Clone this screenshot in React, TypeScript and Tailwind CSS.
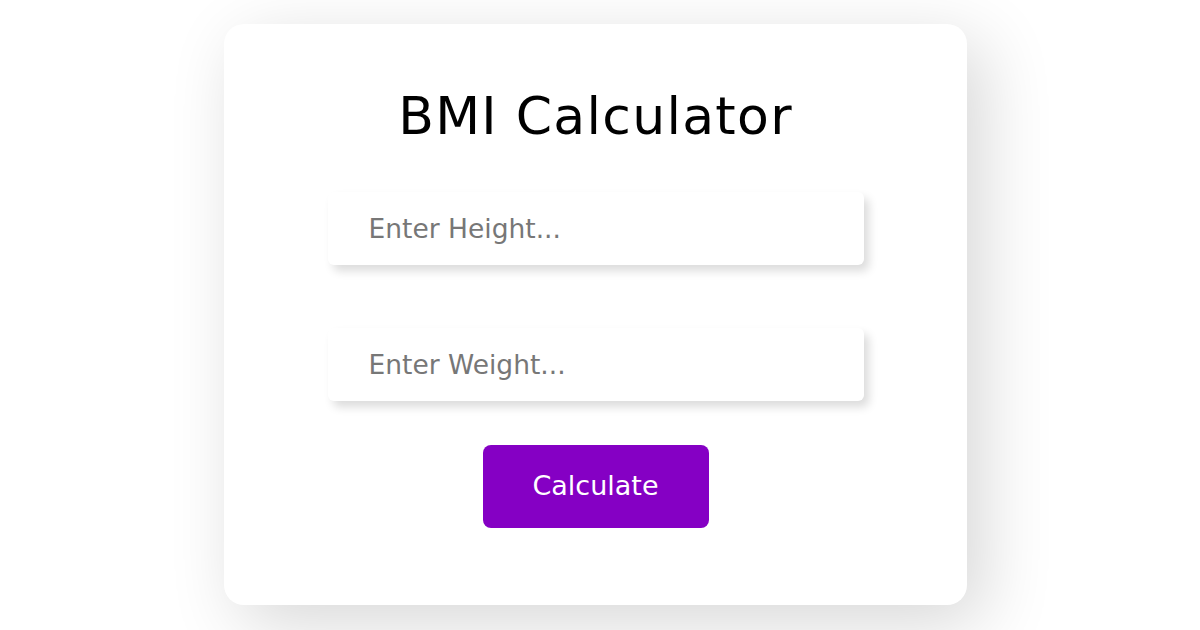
import React from "react";

export default function App() {
  return (
    <div className="w-[1200px] h-[630px] bg-white flex justify-center items-start pt-[24px] pr-[9px] overflow-hidden" style={{ fontFamily: '"DejaVu Sans", "Noto Sans", sans-serif' }}>
      <div className="w-[743px] h-[581px] bg-white rounded-[20px] shadow-[16px_18px_70px_rgba(0,0,0,0.16)] flex flex-col items-center">
        <h1 className="mt-[62px] text-[52px] leading-[60px] text-black font-normal tracking-[1.3px]">BMI Calculator</h1>
        <input
          type="text"
          placeholder="Enter Height..."
          className="mt-[46px] w-[536px] h-[73px] rounded-[6px] bg-white pl-[41px] text-[26.5px] placeholder:text-[#777] outline-none shadow-[5px_6px_10px_rgba(0,0,0,0.14)]"
        />
        <input
          type="text"
          placeholder="Enter Weight..."
          className="mt-[63px] w-[536px] h-[73px] rounded-[6px] bg-white pl-[41px] text-[26.5px] placeholder:text-[#777] outline-none shadow-[5px_6px_10px_rgba(0,0,0,0.14)]"
        />
        <button className="mt-[44px] w-[226px] h-[83px] rounded-[8px] bg-[#8500c4] text-white text-[27px]">
          Calculate
        </button>
      </div>
    </div>
  );
}
